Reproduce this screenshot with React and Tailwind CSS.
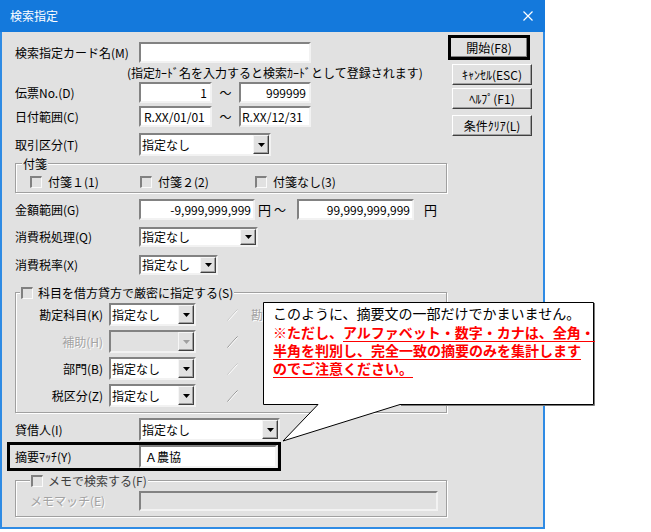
import React from "react";

const SUNKEN =
  "border-2 border-t-[#828282] border-l-[#828282] border-b-[#f2f2f2] border-r-[#f2f2f2] ";
const DIS = "text-[#a3a3a3] [text-shadow:1px_1px_0_#ffffff] ";

function Sunken({ className = "", children }) {
  return <div className={SUNKEN + className}>{children}</div>;
}

function Arrow({ disabled }) {
  return (
    <svg width="7" height="4" viewBox="0 0 7 4">
      <path d="M0 0H7L3.5 4Z" fill={disabled ? "#a0a0a0" : "#000000"} />
    </svg>
  );
}

function Select({ className = "", value, disabled }) {
  return (
    <div
      className={
        SUNKEN + "flex " + (disabled ? "bg-[#e1e1e1] " : "bg-white ") + className
      }
    >
      <div className="flex-1 flex items-center pl-[1px] whitespace-nowrap">{value}</div>
      <div className="w-[16px] flex items-center justify-center border border-t-[#f6f6f6] border-l-[#f6f6f6] border-b-[#404040] border-r-[#404040] bg-[#e1e1e1] shadow-[inset_-1px_-1px_0_#a0a0a0]">
        <Arrow disabled={disabled} />
      </div>
    </div>
  );
}

function Check() {
  return (
    <div className="w-[12px] h-[12px] shrink-0 border-t-2 border-l-2 border-r border-b border-t-[#808080] border-l-[#808080] border-r-[#fafafa] border-b-[#fafafa]" />
  );
}

function Group({ className = "", legendClass = "", legend, children }) {
  return (
    <div
      className={
        "relative border border-[#a0a0a0] shadow-[inset_1px_1px_0_#ffffff,1px_1px_0_#ffffff] " +
        className
      }
    >
      <div
        className={
          "absolute top-[-8px] h-[15px] px-[1px] flex items-center gap-[5px] bg-[#e1e1e1] whitespace-nowrap " +
          legendClass
        }
      >
        {legend}
      </div>
      {children}
    </div>
  );
}

function Slash({ dark }) {
  return (
    <svg width="11" height="12" viewBox="0 0 11 12" className="shrink-0">
      <line x1="0.5" y1="11.5" x2="10.5" y2="0.5" stroke={dark ? "#8a8a8a" : "#c4c4c4"} strokeWidth="1" />
      <line x1="1.5" y1="11.5" x2="10.5" y2="1.5" stroke="#ffffff" strokeWidth="1" />
    </svg>
  );
}

function Btn({ children }) {
  return (
    <div className="ml-[5px] w-[80px] h-[21px] flex items-center justify-center border border-t-white border-l-white border-b-[#404040] border-r-[#404040] shadow-[inset_-1px_-1px_0_#a0a0a0] whitespace-nowrap">
      {children}
    </div>
  );
}

export default function App() {
  const kamoku = [
    { label: "勘定科目(K)", dis: false, dark: false, extra: true },
    { label: "補助(H)", dis: true, dark: true },
    { label: "部門(B)", dis: false, dark: false },
    { label: "税区分(Z)", dis: false, dark: true },
  ];
  return (
    <div className="relative w-[651px] h-[532px] bg-white overflow-hidden text-[12px] leading-none text-black font-['Noto_Sans_CJK_JP','MS_UI_Gothic',sans-serif]">
      <div className="w-[545px] h-[529px] flex flex-col bg-[#2f8be4] px-[2px] pb-[2px]">
        <div className="h-[32px] shrink-0 -mx-[2px] bg-[#1479dc] flex items-center justify-between pl-[10px] pr-[12px] text-white">
          <span>検索指定</span>
          <svg width="10" height="10" viewBox="0 0 10 10">
            <path d="M0.5 0.5L9.5 9.5M9.5 0.5L0.5 9.5" stroke="#ffffff" strokeWidth="1.2" />
          </svg>
        </div>
        <div className="flex-1 bg-[#e1e1e1] flex">
          {/* left form */}
          <div className="w-[445px] shrink-0 pl-[13px] pt-[10px] flex flex-col">
            <div className="flex items-center h-[21px]">
              <div className="w-[124px] whitespace-nowrap">検索指定カード名(M)</div>
              <Sunken className="w-[172px] h-[21px] bg-white" />
            </div>
            <div className="h-[19px] flex items-center pl-[112px] whitespace-nowrap">
              (指定ｶｰﾄﾞ名を入力すると検索ｶｰﾄﾞとして登録されます)
            </div>
            <div className="flex items-center h-[21px]">
              <div className="w-[124px]">伝票No.(D)</div>
              <Sunken className="w-[73px] h-[21px] bg-white flex items-center justify-end pr-[3px]">1</Sunken>
              <div className="w-[27px] text-center">～</div>
              <Sunken className="w-[72px] h-[21px] bg-white flex items-center justify-end pr-[3px]">999999</Sunken>
            </div>
            <div className="mt-[3px] flex items-center h-[21px]">
              <div className="w-[124px]">日付範囲(C)</div>
              <Sunken className="w-[73px] h-[21px] bg-white flex items-center pl-[3px]">R.XX/01/01</Sunken>
              <div className="w-[27px] text-center">～</div>
              <Sunken className="w-[72px] h-[21px] bg-white flex items-center pl-[1px]">R.XX/12/31</Sunken>
            </div>
            <div className="mt-[6px] flex items-center h-[23px]">
              <div className="w-[124px]">取引区分(T)</div>
              <Select className="w-[132px] h-[23px]" value="指定なし" />
            </div>
            <Group className="mt-[7px] w-[432px] h-[30px]" legendClass="left-[6px]" legend={<span>付箋</span>}>
              <div className="flex items-center h-full pt-[8px] pl-[14px]">
                <div className="w-[110px] flex items-center gap-[6px]">
                  <Check />
                  <span>付箋１(1)</span>
                </div>
                <div className="w-[115px] flex items-center gap-[6px]">
                  <Check />
                  <span>付箋２(2)</span>
                </div>
                <div className="flex items-center gap-[6px]">
                  <Check />
                  <span>付箋なし(3)</span>
                </div>
              </div>
            </Group>
            <div className="mt-[6px] flex items-center h-[21px]">
              <div className="w-[124px]">金額範囲(G)</div>
              <Sunken className="w-[116px] h-[21px] bg-white flex items-center justify-end pr-[2px]">-9,999,999,999</Sunken>
              <div className="ml-[3px] text-[13px]">円</div>
              <div className="ml-[2px] w-[14px] text-center">～</div>
              <Sunken className="ml-[10px] w-[117px] h-[21px] bg-white flex items-center justify-end pr-[2px]">99,999,999,999</Sunken>
              <div className="ml-[10px] text-[13px]">円</div>
            </div>
            <div className="mt-[7px] flex items-center h-[20px]">
              <div className="w-[124px]">消費税処理(Q)</div>
              <Select className="w-[119px] h-[20px]" value="指定なし" />
            </div>
            <div className="mt-[8px] flex items-center h-[20px]">
              <div className="w-[124px]">消費税率(X)</div>
              <Select className="w-[79px] h-[20px]" value="指定なし" />
            </div>
            <Group
              className="mt-[17px] w-[432px] h-[121px]"
              legendClass="left-[4px]"
              legend={
                <>
                  <Check />
                  <span>科目を借方貸方で厳密に指定する(S)</span>
                </>
              }
            >
              <div className="pt-[10px] flex flex-col gap-[4px]">
                {kamoku.map((r) => (
                  <div key={r.label} className="flex items-center h-[23px]">
                    <div className={"w-[87px] text-right whitespace-nowrap " + (r.dis ? DIS : "")}>{r.label}</div>
                    <Select className="ml-[6px] w-[87px] h-[23px]" value={r.dis ? "" : "指定なし"} disabled={r.dis} />
                    <div className="ml-[31px]">
                      <Slash dark={r.dark} />
                    </div>
                    {r.extra && <div className={"ml-[13px] whitespace-nowrap " + DIS}>勘</div>}
                  </div>
                ))}
              </div>
            </Group>
            <div className="mt-[5px] flex items-center h-[23px]">
              <div className="w-[124px]">貸借人(I)</div>
              <Select className="w-[141px] h-[23px]" value="指定なし" />
            </div>
            <div className="mt-[1px] -ml-[8px] w-[274px] h-[29px] border-[3px] border-black flex items-center pl-[5px]">
              <div className="w-[124px] whitespace-nowrap">摘要ﾏｯﾁ(Y)</div>
              <Sunken className="w-[138px] h-[23px] bg-white flex items-center pl-[4px]">Ａ農協</Sunken>
            </div>
            <Group
              className="mt-[9px] w-[432px] h-[37px]"
              legendClass="left-[14px]"
              legend={
                <>
                  <Check />
                  <span className="text-[#3c3c3c]">メモで検索する(F)</span>
                </>
              }
            >
              <div className="flex items-center pt-[10px] pl-[14px]">
                <div className={"w-[109px] whitespace-nowrap " + DIS}>メモマッチ(E)</div>
                <Sunken className="w-[299px] h-[20px]" />
              </div>
            </Group>
          </div>
          {/* right buttons */}
          <div className="flex-1 flex flex-col pt-[3px]">
            <div className="ml-[1px] w-[82px] h-[25px] border-[3px] border-black flex items-center justify-center shadow-[inset_-1px_-1px_0_#808080]">
              開始(F8)
            </div>
            <div className="mt-[4px]">
              <Btn>ｷｬﾝｾﾙ(ESC)</Btn>
            </div>
            <div className="mt-[3px]">
              <Btn>ﾍﾙﾌﾟ(F1)</Btn>
            </div>
            <div className="mt-[6px]">
              <Btn>条件ｸﾘｱ(L)</Btn>
            </div>
          </div>
        </div>
      </div>

      {/* callout */}
      <svg className="absolute left-0 top-0" width="651" height="532" viewBox="0 0 651 532">
        <path
          d="M263.5 302.5H593.5V404.5H400L283 441L318 404.5H263.5Z"
          fill="#ffffff"
          stroke="#000000"
          strokeWidth="1"
        />
        <path d="M594.5 303V405.5H401" fill="none" stroke="#7a7a7a" strokeWidth="1" />
      </svg>
      <div className="absolute left-[273px] top-[304px] text-[14px] whitespace-nowrap flex flex-col">
        <div className="h-[19px] leading-[18px]">このように、摘要文の一部だけでかまいません。</div>
        <div className="h-[18px] leading-[18px] text-[#ff0000] font-bold">
          ※ただし、
          <span className="underline decoration-[#ff0000] underline-offset-[3px]">
            アルファベット・数字・カナは、全角・
          </span>
        </div>
        <div className="h-[18px] leading-[18px] text-[#ff0000] font-bold underline decoration-[#ff0000] underline-offset-[3px]">
          半角を判別し、完全一致の摘要のみを集計します
        </div>
        <div className="h-[18px] leading-[18px] text-[#ff0000] font-bold">
          <span className="underline decoration-[#ff0000] underline-offset-[3px]">のでご注意ください。</span>
        </div>
      </div>
    </div>
  );
}
